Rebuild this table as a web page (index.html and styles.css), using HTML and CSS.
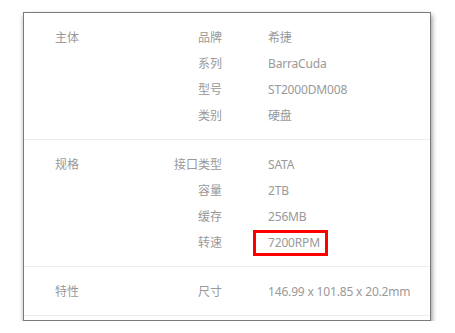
FILE: index.html
```html
<!DOCTYPE html>
<html lang="zh-CN">
<head>
<meta charset="utf-8">
<title>规格参数</title>
<link rel="stylesheet" href="styles.css">
</head>
<body>
<div class="spec-card">
  <section class="spec-group">
    <div class="group-name">主体</div>
    <dl class="spec-list">
      <div class="spec-row"><dt>品牌</dt><dd>希捷</dd></div>
      <div class="spec-row"><dt>系列</dt><dd>BarraCuda</dd></div>
      <div class="spec-row"><dt>型号</dt><dd>ST2000DM008</dd></div>
      <div class="spec-row"><dt>类别</dt><dd>硬盘</dd></div>
    </dl>
  </section>
  <section class="spec-group">
    <div class="group-name">规格</div>
    <dl class="spec-list">
      <div class="spec-row"><dt>接口类型</dt><dd>SATA</dd></div>
      <div class="spec-row"><dt>容量</dt><dd>2TB</dd></div>
      <div class="spec-row"><dt>缓存</dt><dd>256MB</dd></div>
      <div class="spec-row"><dt>转速</dt><dd><span class="highlight">7200RPM</span></dd></div>
    </dl>
  </section>
  <section class="spec-group">
    <div class="group-name">特性</div>
    <dl class="spec-list">
      <div class="spec-row"><dt>尺寸</dt><dd>146.99 x 101.85 x 20.2mm</dd></div>
    </dl>
  </section>
</div>
</body>
</html>
```
FILE: styles.css
```css
html, body {
  margin: 0;
  padding: 0;
  background: #ffffff;
}

body {
  padding: 12px 0 0 23px;
  font-family: "Noto Sans", "Noto Sans CJK SC", sans-serif;
  font-size: 12px;
  color: #999999;
}

.spec-card {
  width: 406px;
  border: 1px solid #7a7a7a;
  background: #ffffff;
  padding-bottom: 4px;
  box-shadow: 1px 3px 5px rgba(0, 0, 0, 0.45);
}

.spec-group {
  display: grid;
  grid-template-columns: 167px 1fr;
  padding: 12px 0 10px 31px;
  border-bottom: 1px solid #ececec;
}

.group-name {
  line-height: 26px;
}

.spec-list {
  margin: 0;
}

.spec-row {
  display: grid;
  grid-template-columns: 0px 1fr;
  height: 26px;
  line-height: 26px;
}

.spec-row dt {
  justify-self: end;
  white-space: nowrap;
}

.spec-row dd {
  margin: 0 0 0 46px;
  white-space: nowrap;
  letter-spacing: -0.17px;
}

.highlight {
  position: relative;
  display: inline-block;
}

.highlight::after {
  content: "";
  position: absolute;
  left: -15px;
  right: -8px;
  top: 0;
  bottom: 0;
  border: 3px solid #ff0000;
}
```
